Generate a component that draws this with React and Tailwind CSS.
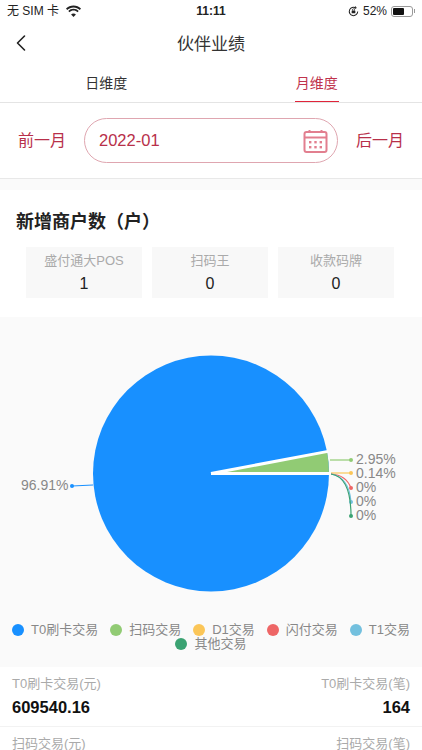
import { ChevronLeft } from 'lucide-react';

const FONT = 'font-["Liberation_Sans","Noto_Sans_CJK_SC",sans-serif]';

const WifiIcon = () => (
  <svg width="17" height="12" viewBox="0 0 17 12" fill="#222">
    <path d="M8.5 2.4c2.4 0 4.6.9 6.3 2.5l1.2-1.3C14 1.7 11.4.6 8.5.6S3 1.7 1 3.6l1.2 1.3C3.9 3.3 6.1 2.4 8.5 2.4z" />
    <path d="M8.5 5.6c1.5 0 2.9.6 4 1.6l1.2-1.3c-1.4-1.3-3.2-2.1-5.2-2.1s-3.8.8-5.2 2.1l1.2 1.3c1.1-1 2.5-1.6 4-1.6z" />
    <path d="M8.5 8.4c-.9 0-1.8.4-2.4 1l2.4 2.5 2.4-2.5c-.6-.6-1.5-1-2.4-1z" />
  </svg>
);

const RotationLockIcon = () => (
  <svg width="11" height="11" viewBox="0 0 12 12" fill="none" stroke="#222" strokeWidth="1.1">
    <path d="M10.6 6A4.6 4.6 0 1 1 8.4 2" />
    <path d="M7.8.6l1 1.5-1.6.8" />
    <rect x="4" y="5" width="4" height="3" rx=".5" fill="#222" stroke="none" />
    <path d="M4.8 5V4.2a1.2 1.2 0 0 1 2.4 0V5" strokeWidth=".8" />
  </svg>
);

const BatteryIcon = () => (
  <div className="flex items-center">
    <div className="w-[22px] h-[11px] rounded-[3px] border border-[#999] p-[1px]">
      <div className="w-[11px] h-full rounded-[1px] bg-[#111]" />
    </div>
    <div className="w-[1px] h-[4px] bg-[#999] ml-[1px]" />
  </div>
);

const CalendarIcon = () => (
  <svg width="25" height="24" viewBox="0 0 25 24" fill="none" stroke="#e27f8f" strokeWidth="2">
    <rect x="1.5" y="3" width="22" height="20" rx="2" />
    <line x1="1.5" y1="8.5" x2="23.5" y2="8.5" />
    <line x1="6.5" y1="1" x2="6.5" y2="4" />
    <line x1="18.5" y1="1" x2="18.5" y2="4" />
    <g fill="#e27f8f" stroke="none">
      <rect x="6" y="12" width="2.4" height="2.4" />
      <rect x="11.3" y="12" width="2.4" height="2.4" />
      <rect x="16.6" y="12" width="2.4" height="2.4" />
      <rect x="6" y="17" width="2.4" height="2.4" />
      <rect x="11.3" y="17" width="2.4" height="2.4" />
      <rect x="16.6" y="17" width="2.4" height="2.4" />
    </g>
  </svg>
);

const StatBox = ({ label, value }) => (
  <div className="flex-1 h-[51px] bg-[#f8f8f8] flex flex-col items-center pt-[4px]">
    <span className="text-[13px] leading-[20px] text-[#aaa]">{label}</span>
    <span className="text-[16px] leading-[26px] text-[#222]">{value}</span>
  </div>
);

const LEADERS = [
  { d: 'M330 459 L351 459', color: '#91cb74', y: 459, text: '2.95%', ty: 463 },
  { d: 'M331 472 L352 472', color: '#fbc658', y: 472, text: '0.14%', ty: 477 },
  { d: 'M331 473 Q346 474 351 487', color: '#ee6666', y: 487, text: '0%', ty: 491 },
  { d: 'M331 473 Q349 476 351 501', color: '#73c0de', y: 501, text: '0%', ty: 505 },
  { d: 'M331 473 Q351 476 351 515', color: '#3ba272', y: 515, text: '0%', ty: 519 },
];

const PieChart = () => (
  <svg width="422" height="290" viewBox="0 316 422 290" className="block">
    <circle cx="211" cy="472.5" r="118" fill="#1890ff" />
    <path d="M211 472.5 L327 450.6 A118 118 0 0 1 329 472.5 Z" fill="#91cb74" />
    <path d="M211 472.5 L328 450.4" stroke="#fff" strokeWidth="3" />
    <path d="M211 472.5 L331 472.5" stroke="#fff" strokeWidth="3" />
    {LEADERS.map((l) => (
      <g key={l.text + l.ty}>
        <path d={l.d} fill="none" stroke={l.color} strokeWidth="1.2" />
        <circle cx="351" cy={l.y} r="2" fill={l.color} />
        <text x="356" y={l.ty} fontSize="14" fill="#888">{l.text}</text>
      </g>
    ))}
    <path d="M93 484 L72 485" stroke="#1890ff" strokeWidth="1.2" fill="none" />
    <circle cx="72" cy="485" r="2" fill="#1890ff" />
    <text x="21" y="489" fontSize="14" fill="#888">96.91%</text>
  </svg>
);

const LegendItem = ({ color, label }) => (
  <div className="flex items-center gap-[7px]">
    <span className={`w-[12px] h-[12px] rounded-full ${color}`} />
    <span className="text-[13px] leading-[14px] text-[#888]">{label}</span>
  </div>
);

const DataRow = ({ left, right, leftValue, rightValue }) => (
  <div className="px-[12px] pt-[7px] h-[60px] border-b border-[#f2f2f2] flex justify-between">
    <div className="flex flex-col">
      <span className="text-[13px] leading-[20px] text-[#aaa]">{left}</span>
      <span className="text-[16.5px] leading-[26px] font-bold text-[#111]">{leftValue}</span>
    </div>
    <div className="flex flex-col items-end">
      <span className="text-[13px] leading-[20px] text-[#aaa]">{right}</span>
      <span className="text-[16.5px] leading-[26px] font-bold text-[#111]">{rightValue}</span>
    </div>
  </div>
);

export default function App() {
  return (
    <div className={`w-[422px] h-[750px] overflow-hidden bg-white ${FONT}`}>
      {/* Status bar */}
      <div className="h-[22px] px-[7px] flex items-center justify-between relative text-[12px] text-[#222]">
        <div className="flex items-center gap-[6px]">
          <span>无 SIM 卡</span>
          <WifiIcon />
        </div>
        <span className="absolute left-0 right-0 text-center font-bold text-[#222]">11:11</span>
        <div className="flex items-center gap-[4px]">
          <RotationLockIcon />
          <span>52%</span>
          <BatteryIcon />
        </div>
      </div>

      {/* Nav */}
      <div className="h-[42px] pt-[4px] relative flex items-center justify-center">
        <ChevronLeft className="absolute left-[7px] top-[7px]" size={28} strokeWidth={1.4} color="#222" />
        <span className="text-[17px] text-[#333]">伙伴业绩</span>
      </div>

      {/* Tabs */}
      <div className="h-[39px] flex border-b border-[#e4e4e4]">
        <div className="flex-1 flex justify-center pl-[1px]">
          <span className="text-[14px] leading-[38px] text-[#333]">日维度</span>
        </div>
        <div className="flex-1 flex justify-center">
          <span className="text-[14px] leading-[38px] h-[38px] text-[#c0334d] border-b-[1.5px] border-[#e0243a] px-[1px]">月维度</span>
        </div>
      </div>

      {/* Month picker */}
      <div className="h-[76px] px-[18px] flex items-center justify-between border-b border-[#e8e8e8]">
        <span className="text-[16px] text-[#b8304a]">前一月</span>
        <div className="w-[254px] h-[45px] rounded-full border border-[#dfa6b0] pl-[14px] pr-[9px] flex items-center justify-between">
          <span className="text-[16.5px] text-[#b8304a]">2022-01</span>
          <CalendarIcon />
        </div>
        <span className="text-[16px] text-[#b8304a]">后一月</span>
      </div>
      <div className="h-[11px] bg-[#fafafa]" />

      {/* New merchants */}
      <div className="h-[127px] pt-[18px]">
        <h2 className="px-[16px] text-[18px] leading-[28px] font-bold text-[#222]">新增商户数（户）</h2>
        <div className="mt-[11px] pl-[26px] pr-[28px] flex gap-[10px]">
          <StatBox label="盛付通大POS" value="1" />
          <StatBox label="扫码王" value="0" />
          <StatBox label="收款码牌" value="0" />
        </div>
      </div>

      {/* Chart */}
      <div className="h-[350px] bg-[#fafafa]">
        <PieChart />
        <div className="pt-[16px] flex flex-col items-center">
          <div className="flex justify-center gap-[12px] h-[14px]">
            <LegendItem color="bg-[#1890ff]" label="T0刷卡交易" />
            <LegendItem color="bg-[#91cb74]" label="扫码交易" />
            <LegendItem color="bg-[#fbc658]" label="D1交易" />
            <LegendItem color="bg-[#ee6666]" label="闪付交易" />
            <LegendItem color="bg-[#73c0de]" label="T1交易" />
          </div>
          <div className="flex justify-center">
            <LegendItem color="bg-[#3ba272]" label="其他交易" />
          </div>
        </div>
      </div>

      {/* Totals */}
      <DataRow left="T0刷卡交易(元)" right="T0刷卡交易(笔)" leftValue="609540.16" rightValue="164" />
      <DataRow left="扫码交易(元)" right="扫码交易(笔)" leftValue="" rightValue="" />
    </div>
  );
}
